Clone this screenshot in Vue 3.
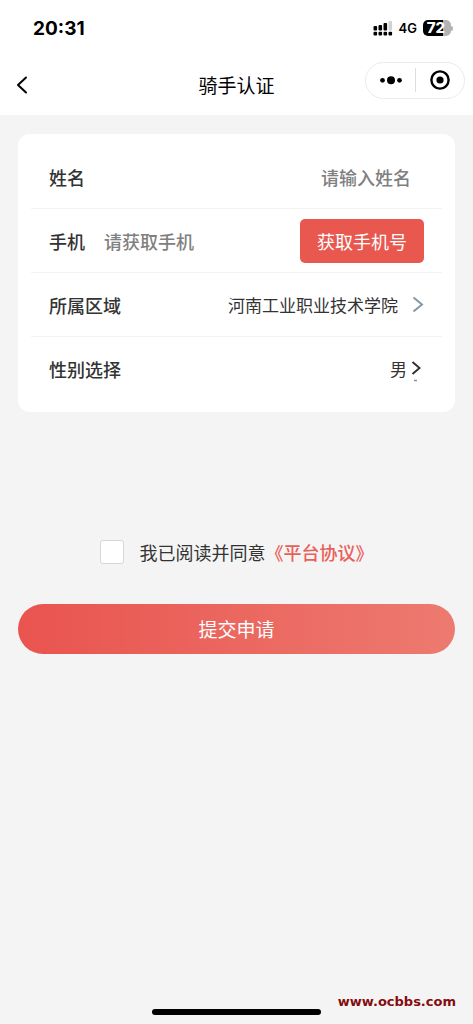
<script setup>
import { ref } from 'vue'

const name = ref('')
const phone = ref('')
const region = ref('河南工业职业技术学院')
const gender = ref('男')
const agreed = ref(false)
</script>

<template>
  <div class="page">
    <header class="top">
      <div class="status">
        <span class="time">20:31</span>
        <div class="status-right">
          <svg class="signal" width="20" height="16" viewBox="0 0 20 16" aria-hidden="true">
            <g fill="#000">
              <rect x="0.500" y="6" width="3.600" height="4.500" rx="1" />
              <rect x="5.500" y="5" width="3.600" height="5.500" rx="1" />
              <rect x="10.500" y="3" width="3.600" height="7.500" rx="1" />
              <rect x="0.500" y="11.800" width="3.600" height="3.600" rx="1" />
              <rect x="5.500" y="11.800" width="3.600" height="3.600" rx="1" />
              <rect x="10.500" y="11.800" width="3.600" height="3.600" rx="1" />
              <rect x="15.500" y="11.800" width="3.600" height="3.600" rx="1" />
            </g>
            <rect x="15.500" y="1" width="3.600" height="9.500" rx="1" fill="#d2d2d2" />
          </svg>
          <span class="network">4G</span>
          <div class="battery"><span class="level">72</span></div>
          <span class="battery-tip"></span>
        </div>
      </div>
      <nav class="nav">
        <button class="back" type="button" aria-label="返回">
          <svg width="12" height="20" viewBox="0 0 12 20" fill="none" stroke="#000" stroke-width="2" stroke-linecap="round" stroke-linejoin="round">
            <path d="M10 1.500 2 9l8 7.500" />
          </svg>
        </button>
        <h1>骑手认证</h1>
        <div class="capsule">
          <button type="button" aria-label="更多">
            <svg width="24" height="24" viewBox="0 0 24 24">
              <circle cx="3.500" cy="12.300" r="2.400" />
              <circle cx="12" cy="12.300" r="4" />
              <circle cx="20.500" cy="12.300" r="2.400" />
            </svg>
          </button>
          <button type="button" aria-label="关闭">
            <svg width="24" height="24" viewBox="0 0 24 24">
              <circle cx="12" cy="12" r="8.600" fill="none" stroke="#000" stroke-width="2.400" />
              <circle cx="12" cy="12" r="3.600" />
            </svg>
          </button>
        </div>
      </nav>
    </header>

    <form class="form" @submit.prevent>
      <section class="card">
        <div class="row">
          <label for="name">姓名</label>
          <input id="name" v-model="name" class="name-input" type="text" placeholder="请输入姓名" />
        </div>
        <div class="row">
          <label for="phone">手机</label>
          <input id="phone" v-model="phone" class="phone-input" type="tel" placeholder="请获取手机" />
          <button class="get-phone" type="button">获取手机号</button>
        </div>
        <div class="row">
          <label for="region">所属区域</label>
          <select id="region" v-model="region" class="region">
            <option>河南工业职业技术学院</option>
          </select>
          <svg class="chevron" width="12" height="18" viewBox="0 0 12 18" fill="none" stroke="#8797a1" stroke-width="2" aria-hidden="true">
            <path d="M1.500 1.500 10 8.500l-8.500 7" />
          </svg>
        </div>
        <div class="row">
          <label for="gender">性别选择</label>
          <select id="gender" v-model="gender" class="gender">
            <option>男</option>
            <option>女</option>
          </select>
          <svg class="chevron gender-chevron" width="10" height="26" viewBox="0 0 10 26" fill="none" stroke="#333" stroke-width="2" aria-hidden="true">
            <path d="M1.500 6 8.500 12l-7 6" />
            <path d="M3 24.500h3" stroke="#8b8f94" stroke-width="1.500" />
          </svg>
        </div>
      </section>

      <div class="agreement">
        <input id="agree" v-model="agreed" type="checkbox" />
        <label for="agree">我已阅读并同意</label>
        <a href="#">《平台协议》</a>
      </div>

      <button class="submit" type="submit">提交申请</button>
    </form>

    <footer class="footer">
      <div class="home-bar"></div>
      <span class="site">www.ocbbs.com</span>
    </footer>
  </div>
</template>

<style>
body {
  margin: 0;
  background: #f4f4f4;
}
</style>

<style scoped>
.page {
  display: flex;
  flex-direction: column;
  min-height: 100vh;
  font-family: "Noto Sans CJK SC", sans-serif;
  font-size: 18px;
  line-height: 28px;
  color: #333;
}
button,
input,
select {
  box-sizing: border-box;
  margin: 0;
  padding: 0;
  border: 0;
  background: none;
  font: inherit;
  color: inherit;
}
svg {
  display: block;
  flex: none;
}
.top {
  background: #fff;
  color: #000;
}
.status {
  display: flex;
  align-items: center;
  justify-content: space-between;
  height: 56px;
  padding: 0 20px 0 33px;
  font-family: Inter, sans-serif;
}
.time {
  font-size: 19px;
  font-weight: 700;
  line-height: 29px;
}
.status-right {
  display: flex;
  align-items: center;
}
.network {
  margin: 0 6px;
  font-size: 13px;
  font-weight: 600;
}
.battery {
  display: flex;
  align-items: center;
  justify-content: center;
  box-sizing: border-box;
  width: 28px;
  height: 16px;
  padding-right: 2px;
  border-radius: 5px;
  background: linear-gradient(90deg, #000 72%, #b3b3b3 72%);
}
.level {
  color: #fff;
  font-size: 15px;
  font-weight: 800;
  line-height: 16px;
}
.battery-tip {
  width: 2px;
  height: 5px;
  border-radius: 0 2px 2px 0;
  background: #b3b3b3;
}
.nav {
  display: grid;
  grid-template-columns: 1fr auto 1fr;
  align-items: center;
  height: 59px;
  padding: 0 8px;
}
.back {
  justify-self: start;
  margin-left: 8px;
}
h1 {
  margin: 0;
  padding-bottom: 2px;
  font-size: 19px;
  font-weight: 400;
  line-height: 28px;
}
.capsule {
  display: flex;
  justify-self: end;
  align-items: center;
  box-sizing: border-box;
  width: 100px;
  height: 37px;
  margin-bottom: 11px;
  padding-left: 1px;
  border: 1px solid #ebebeb;
  border-radius: 19px;
}
.capsule button {
  display: flex;
  flex: 1;
  justify-content: center;
}
.capsule button + button {
  border-left: 1px solid #ddd;
}
.form {
  padding: 19px 18px 0;
}
.card {
  padding: 11px 13px;
  border-radius: 12px;
  background: #fff;
}
.row {
  display: flex;
  align-items: center;
  box-sizing: border-box;
  height: 64px;
  padding: 0 18px;
  border-bottom: 1px solid #f3f3f3;
}
.row:last-child {
  border-bottom-color: transparent;
}
.row label {
  flex: none;
  font-weight: 500;
}
.row input {
  flex: 1;
  min-width: 0;
  height: 40px;
  font-weight: 500;
}
.row input::placeholder {
  color: #808080;
  opacity: 1;
}
.row .name-input {
  padding-right: 13px;
  text-align: right;
}
.row .phone-input {
  margin-left: 19px;
}
.get-phone {
  flex: none;
  height: 44px;
  padding: 0 17px;
  border-radius: 5px;
  background: #e9584f;
  color: #fff;
}
.row select {
  flex: 1;
  min-width: 0;
  height: 40px;
  appearance: none;
  font-size: 17px;
  text-align: right;
  text-align-last: right;
}
.chevron {
  margin-left: 14px;
}
.gender-chevron {
  margin: 0 3px 0 4px;
}
.agreement {
  display: flex;
  align-items: center;
  justify-content: center;
  margin-top: 126px;
  line-height: 28px;
}
.agreement input {
  width: 24px;
  height: 24px;
  margin-right: 16px;
  appearance: none;
  border: 1px solid #d8d8d8;
  border-radius: 3px;
  background: #fff;
}
.agreement input:checked {
  background: #e9584f;
}
.agreement a {
  color: #e9605a;
  font-weight: 500;
  text-decoration: none;
}
.submit {
  display: block;
  width: 100%;
  height: 50px;
  margin-top: 38px;
  border-radius: 25px;
  background: linear-gradient(90deg, #e9544f, #ed7a70);
  color: #fff;
  font-size: 19px;
}
.footer {
  position: relative;
  display: flex;
  justify-content: center;
  margin-top: auto;
  padding: 24px 0 9px;
}
.home-bar {
  width: 169px;
  height: 6px;
  border-radius: 3px;
  background: #000;
}
.site {
  position: absolute;
  right: 17px;
  bottom: 14px;
  color: #850c10;
  font-family: "DejaVu Sans", sans-serif;
  font-size: 13px;
  font-weight: 700;
  line-height: 16px;
}
</style>
